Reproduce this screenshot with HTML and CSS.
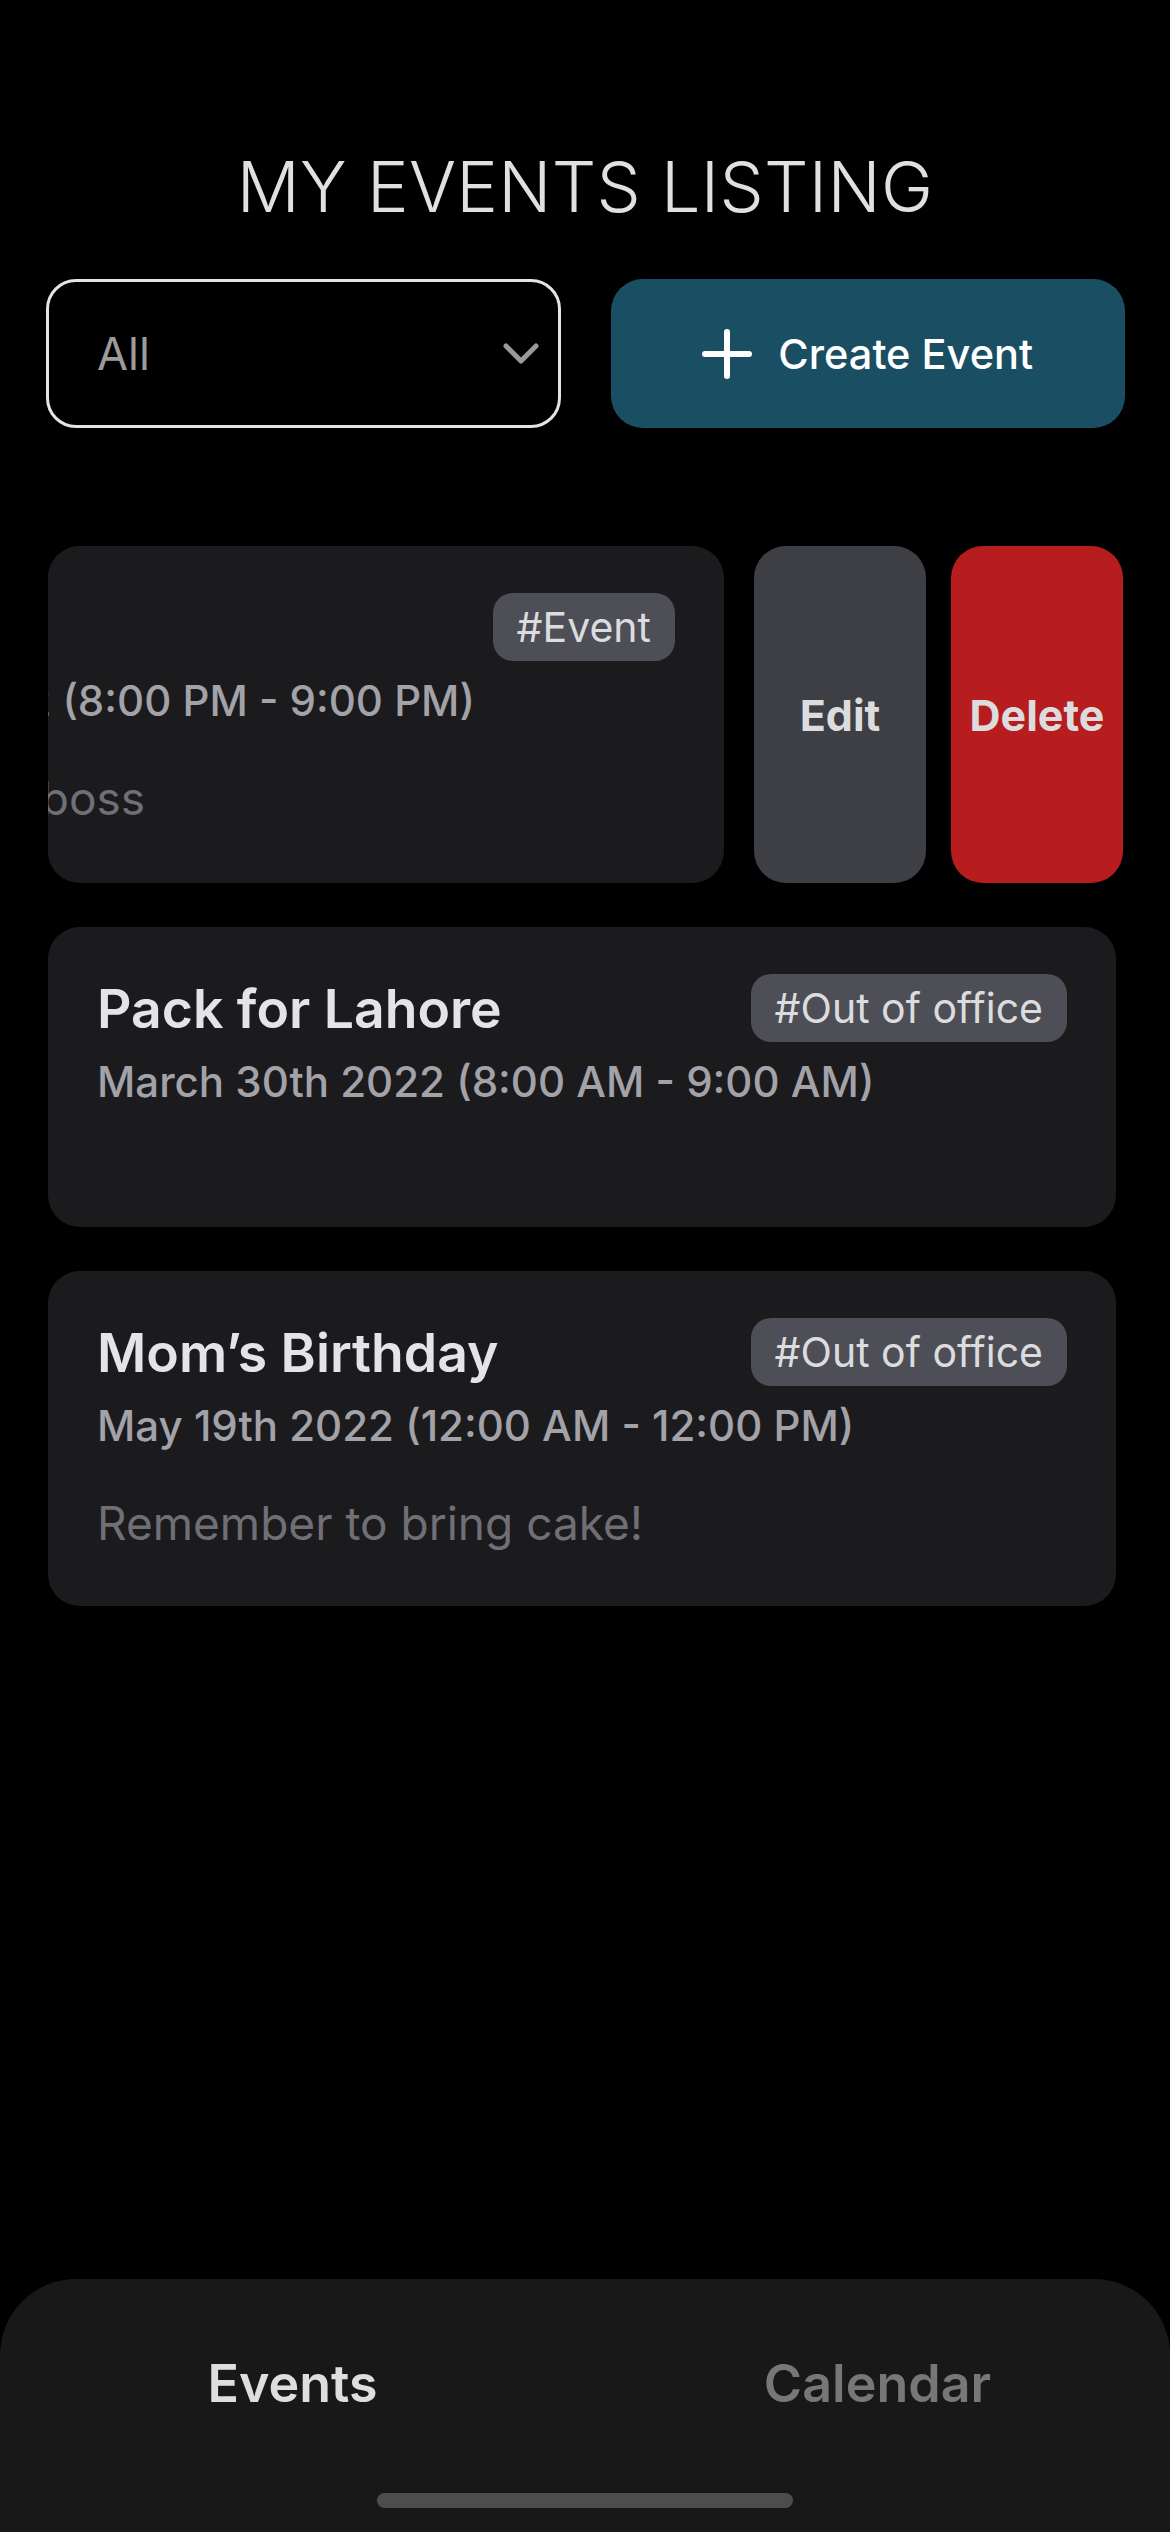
FILE: index.html
```html
<!DOCTYPE html>
<html lang="en">
<head>
<meta charset="utf-8">
<title>My Events Listing</title>
<link rel="stylesheet" href="styles.css">
</head>
<body>
<div class="app">
  <h1 class="title">MY EVENTS LISTING</h1>
  <div class="controls">
    <div class="select">
      <span class="select-value">All</span>
      <svg class="chevron" width="38" height="24" viewBox="0 0 38 24"><polyline points="4,4 19,19 34,4" fill="none" stroke="#9a9a9a" stroke-width="5" stroke-linecap="round" stroke-linejoin="round"/></svg>
    </div>
    <button class="create">
      <svg class="plus" width="50" height="50" viewBox="0 0 50 50"><line x1="25" y1="3" x2="25" y2="47" stroke="#fff" stroke-width="6" stroke-linecap="round"/><line x1="3" y1="25" x2="47" y2="25" stroke="#fff" stroke-width="6" stroke-linecap="round"/></svg>
      <span>Create Event</span>
    </button>
  </div>

  <div class="list">
    <div class="swipe-row">
      <div class="card-clip">
        <div class="card card-shifted">
          <div class="card-head">
            <span class="card-title">Meeting</span>
            <span class="tag">#Event</span>
          </div>
          <div class="card-date">March 28th 2022 (8:00 PM - 9:00 PM)</div>
          <div class="card-desc">Sync with your boss</div>
        </div>
      </div>
      <button class="action edit">Edit</button>
      <button class="action delete">Delete</button>
    </div>

    <div class="card">
      <div class="card-head">
        <span class="card-title">Pack for Lahore</span>
        <span class="tag">#Out of office</span>
      </div>
      <div class="card-date">March 30th 2022 (8:00 AM - 9:00 AM)</div>
    </div>

    <div class="card">
      <div class="card-head">
        <span class="card-title">Mom’s Birthday</span>
        <span class="tag">#Out of office</span>
      </div>
      <div class="card-date">May 19th 2022 (12:00 AM - 12:00 PM)</div>
      <div class="card-desc">Remember to bring cake!</div>
    </div>
  </div>

  <nav class="tabbar">
    <div class="tabs">
      <span class="tab active">Events</span>
      <span class="tab">Calendar</span>
    </div>
    <div class="home-indicator"></div>
  </nav>
</div>
</body>
</html>
```
FILE: styles.css
```css
* { box-sizing: border-box; }
html, body { margin: 0; padding: 0; background: #000; }
body { font-family: Inter, "Noto Sans", sans-serif; color: #e2e2e4; }

.app {
  width: 1170px;
  height: 2532px;
  display: flex;
  flex-direction: column;
  overflow: hidden;
}

.title {
  margin: 147px 0 0;
  font-size: 70px;
  line-height: 80px;
  font-weight: 300;
  text-align: center;
  color: #e0e0e0;
  letter-spacing: 0.3px;
}

.controls {
  margin-top: 52px;
  padding: 0 45px 0 46px;
  display: grid;
  grid-template-columns: 1fr 1fr;
  gap: 50px;
  height: 149px;
}

.select {
  border: 3px solid #e4e4e4;
  border-radius: 30px;
  display: flex;
  align-items: center;
  justify-content: space-between;
  padding: 0 18px 0 48px;
}
.select-value {
  font-size: 45px;
  color: #9b9b9b;
}
.chevron { display: block; }

.create {
  border: 0;
  border-radius: 32px;
  background: #1a4f63;
  color: #fff;
  font-family: inherit;
  font-size: 41.5px;
  font-weight: 500;
  display: flex;
  align-items: center;
  justify-content: center;
  gap: 26px;
  padding: 0;
}
.plus { display: block; }

.list {
  flex: 1;
  margin-top: 118px;
  padding: 0 54px 0 48px;
  display: flex;
  flex-direction: column;
  gap: 44px;
}

.swipe-row {
  display: flex;
  height: 337px;
  margin-right: -6px;
}
.card-clip {
  width: 676px;
  flex: none;
  border-radius: 32px;
  background: #1b1b1e;
  overflow: hidden;
}
.card-shifted {
  width: 1068px;
  margin-left: -392px;
}

.action {
  border: 0;
  border-radius: 32px;
  width: 172px;
  flex: none;
  font-family: inherit;
  font-size: 43px;
  font-weight: 700;
  color: #dcdcdf;
}
.edit { background: #3e3f44; margin-left: 30px; }
.delete { background: #b71c1e; margin-left: 25px; }

.card {
  background: #1b1b1e;
  border-radius: 32px;
  min-height: 300px;
  padding: 47px 49px 57px 49px;
}

.card-head {
  display: flex;
  align-items: center;
  justify-content: space-between;
  height: 68px;
}
.card-title {
  font-size: 53.5px;
  font-weight: 600;
  color: #e4e4e6;
  white-space: nowrap;
}
.tag {
  height: 68px;
  line-height: 68px;
  padding: 0 24px;
  border-radius: 20px;
  background: #4e4f56;
  color: #dcdcdf;
  font-size: 41px;
  white-space: nowrap;
}
.card-date {
  margin-top: 16px;
  font-size: 42px;
  line-height: 48px;
  font-weight: 500;
  color: #a2a2a8;
  white-space: nowrap;
}
.card-desc {
  margin-top: 47px;
  font-size: 46px;
  line-height: 52px;
  color: #6f6f75;
  white-space: nowrap;
}

.tabbar {
  height: 253px;
  flex: none;
  background: #181818;
  border-radius: 76px 76px 0 0;
  display: flex;
  flex-direction: column;
  align-items: center;
}
.tabs {
  margin-top: 74px;
  width: 100%;
  display: grid;
  grid-template-columns: 1fr 1fr;
}
.tab {
  text-align: center;
  font-size: 52px;
  line-height: 62px;
  font-weight: 600;
  color: #777;
}
.tab.active { color: #dedede; }
.home-indicator {
  margin-top: 78px;
  width: 416px;
  height: 15px;
  border-radius: 8px;
  background: #4d4d4d;
}
```
